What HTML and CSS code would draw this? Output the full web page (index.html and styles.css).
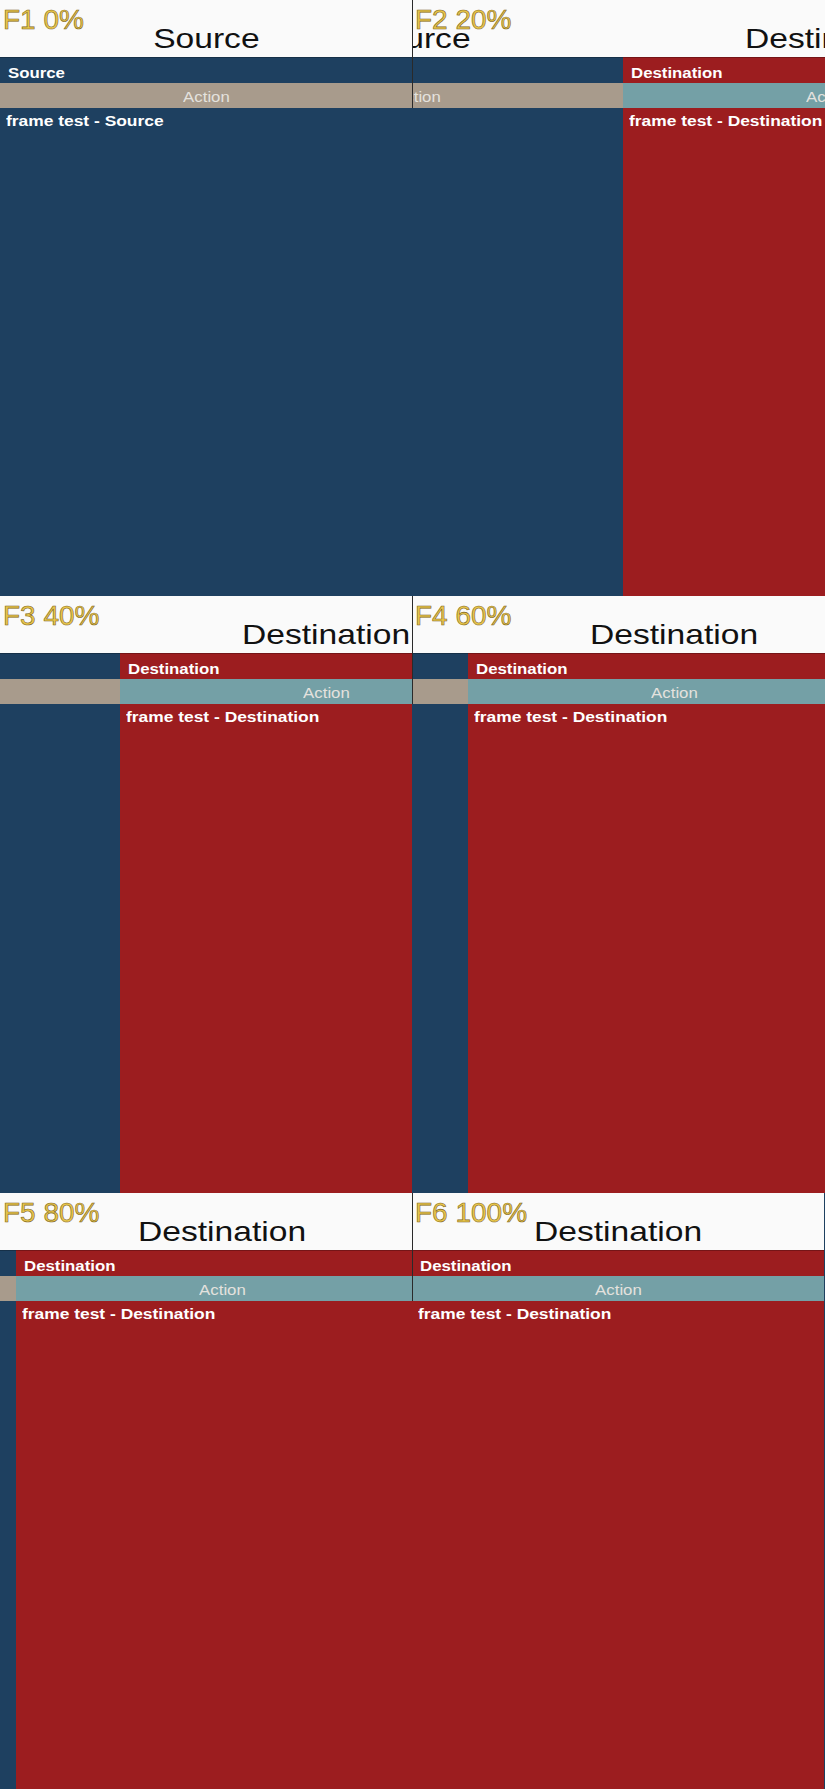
FILE: index.html
```html
<!DOCTYPE html>
<html lang="en">
<head>
    <meta charset="UTF-8">
    <meta name="viewport" content="width=device-width, initial-scale=1.0">
    <title>Frame test</title>
    <link rel="stylesheet" href="styles.css">
</head>
<body>
    <div class="frames">
        <!-- F1 -->
        <div class="frame">
            <div class="track" style="transform: translateX(0px);">
                <div class="page source">
                    <div class="header"><span class="title">Source</span></div>
                    <div class="topbar"><span class="label">Source</span></div>
                    <div class="actionbar"><span class="action">Action</span></div>
                    <div class="content"><span class="text">frame test - Source</span></div>
                </div>
                <div class="page dest">
                    <div class="header"><span class="title">Destination</span></div>
                    <div class="topbar"><span class="label">Destination</span></div>
                    <div class="actionbar"><span class="action">Action</span></div>
                    <div class="content"><span class="text">frame test - Destination</span></div>
                </div>
            </div>
            <div class="tag">F1 0%</div>
        </div>
        <!-- F2 -->
        <div class="frame">
            <div class="track" style="transform: translateX(-201px);">
                <div class="page source">
                    <div class="header"><span class="title">Source</span></div>
                    <div class="topbar"><span class="label">Source</span></div>
                    <div class="actionbar"><span class="action">Action</span></div>
                    <div class="content"><span class="text">frame test - Source</span></div>
                </div>
                <div class="page dest">
                    <div class="header"><span class="title">Destination</span></div>
                    <div class="topbar"><span class="label">Destination</span></div>
                    <div class="actionbar"><span class="action">Action</span></div>
                    <div class="content"><span class="text">frame test - Destination</span></div>
                </div>
            </div>
            <div class="tag">F2 20%</div>
        </div>
        <!-- F3 -->
        <div class="frame">
            <div class="track" style="transform: translateX(-292px);">
                <div class="page source">
                    <div class="header"><span class="title">Source</span></div>
                    <div class="topbar"><span class="label">Source</span></div>
                    <div class="actionbar"><span class="action">Action</span></div>
                    <div class="content"><span class="text">frame test - Source</span></div>
                </div>
                <div class="page dest">
                    <div class="header"><span class="title">Destination</span></div>
                    <div class="topbar"><span class="label">Destination</span></div>
                    <div class="actionbar"><span class="action">Action</span></div>
                    <div class="content"><span class="text">frame test - Destination</span></div>
                </div>
            </div>
            <div class="tag">F3 40%</div>
        </div>
        <!-- F4 -->
        <div class="frame">
            <div class="track" style="transform: translateX(-356px);">
                <div class="page source">
                    <div class="header"><span class="title">Source</span></div>
                    <div class="topbar"><span class="label">Source</span></div>
                    <div class="actionbar"><span class="action">Action</span></div>
                    <div class="content"><span class="text">frame test - Source</span></div>
                </div>
                <div class="page dest">
                    <div class="header"><span class="title">Destination</span></div>
                    <div class="topbar"><span class="label">Destination</span></div>
                    <div class="actionbar"><span class="action">Action</span></div>
                    <div class="content"><span class="text">frame test - Destination</span></div>
                </div>
            </div>
            <div class="tag">F4 60%</div>
        </div>
        <!-- F5 -->
        <div class="frame">
            <div class="track" style="transform: translateX(-396px);">
                <div class="page source">
                    <div class="header"><span class="title">Source</span></div>
                    <div class="topbar"><span class="label">Source</span></div>
                    <div class="actionbar"><span class="action">Action</span></div>
                    <div class="content"><span class="text">frame test - Source</span></div>
                </div>
                <div class="page dest">
                    <div class="header"><span class="title">Destination</span></div>
                    <div class="topbar"><span class="label">Destination</span></div>
                    <div class="actionbar"><span class="action">Action</span></div>
                    <div class="content"><span class="text">frame test - Destination</span></div>
                </div>
            </div>
            <div class="tag">F5 80%</div>
        </div>
        <!-- F6 -->
        <div class="frame">
            <div class="track" style="transform: translateX(-412px);">
                <div class="page source">
                    <div class="header"><span class="title">Source</span></div>
                    <div class="topbar"><span class="label">Source</span></div>
                    <div class="actionbar"><span class="action">Action</span></div>
                    <div class="content"><span class="text">frame test - Source</span></div>
                </div>
                <div class="page dest">
                    <div class="header"><span class="title">Destination</span></div>
                    <div class="topbar"><span class="label">Destination</span></div>
                    <div class="actionbar"><span class="action">Action</span></div>
                    <div class="content"><span class="text">frame test - Destination</span></div>
                </div>
            </div>
            <div class="tag">F6 100%</div>
        </div>
    </div>
</body>
</html>
```

FILE: styles.css
```css
body {
    margin: 0;
    padding: 0;
    font-family: "Liberation Sans", Arial, sans-serif;
    background: #1e4060;
}

.frames {
    display: grid;
    grid-template-columns: 412px 413px;
    grid-template-rows: 596px 597px 596px;
    width: 825px;
    height: 1789px;
}

.frame {
    position: relative;
    overflow: hidden;
    background: #1e4060;
}

/* thin divider on the right column, only over header and bars */
.frame:nth-child(even)::after {
    content: "";
    position: absolute;
    left: 0;
    top: 0;
    width: 1px;
    height: 108px;
    background: #2a2a2a;
    z-index: 3;
}

.track {
    display: flex;
    width: 824px;
    height: 100%;
}

.page {
    display: flex;
    flex-direction: column;
    width: 412px;
    flex: 0 0 412px;
    height: 100%;
}

.header {
    height: 57px;
    background: #fafafa;
    text-align: center;
    box-sizing: border-box;
    padding-top: 23px;
}

.title {
    display: inline-block;
    font-size: 28px;
    line-height: 32px;
    color: #111;
    transform: scaleX(1.2);
}

.topbar {
    height: 26px;
    box-sizing: border-box;
    padding: 6px 0 0 8px;
    border-top: 1px solid rgba(0, 0, 0, 0.25);
}

.label {
    display: inline-block;
    font-size: 14px;
    font-weight: bold;
    line-height: 16px;
    color: #fff;
    transform: scaleX(1.2);
    transform-origin: left center;
}

.actionbar {
    height: 25px;
    box-sizing: border-box;
    padding-top: 5px;
    text-align: center;
}

.action {
    display: inline-block;
    font-size: 14px;
    line-height: 16px;
    color: #e4e2de;
    transform: scaleX(1.2);
}

.content {
    flex: 1;
    padding: 4px 0 0 6px;
}

.text {
    display: inline-block;
    font-size: 14.5px;
    font-weight: bold;
    line-height: 17px;
    color: #fff;
    transform: scaleX(1.2);
    transform-origin: left center;
}

.source .topbar,
.source .content {
    background: #1e4060;
}

.source .actionbar {
    background: #a89b8c;
}

.dest .topbar,
.dest .content {
    background: #9c1d1f;
}

.dest .actionbar {
    background: #74a0a6;
}

.tag {
    position: absolute;
    left: 3px;
    top: 4px;
    font-size: 28px;
    line-height: 32px;
    color: #e9c64a;
    -webkit-text-stroke: 0.6px #7d6420;
    z-index: 4;
}
```
